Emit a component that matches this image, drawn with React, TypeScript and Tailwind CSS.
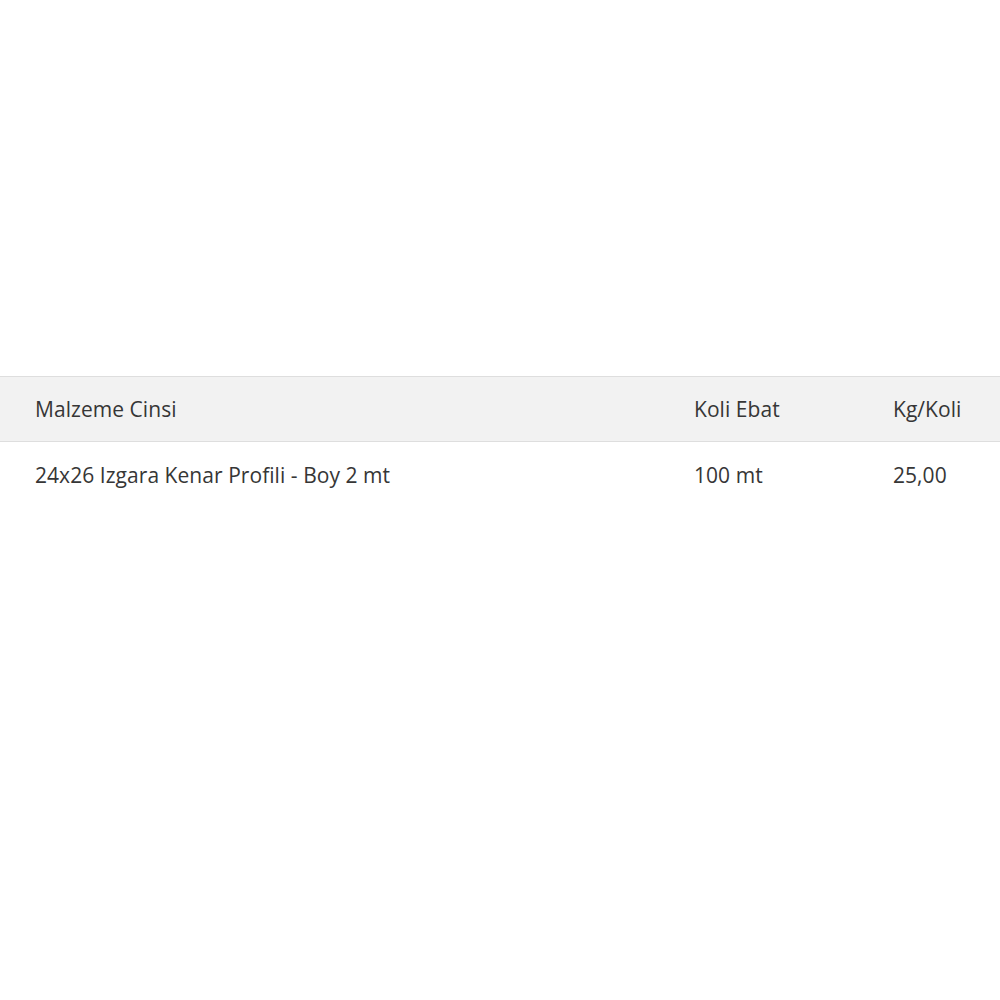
export default function App() {
  const rows = [{ name: "24x26 Izgara Kenar Profili - Boy 2 mt", ebat: "100 mt", kg: "25,00" }];

  return (
    <div className="min-h-[1000px] bg-white pt-[376px] font-['Open_Sans',sans-serif] text-[21px] tracking-[0.05px] text-[#363636]">
      <table className="w-full border-collapse">
        <thead>
          <tr className="border-y border-[#dedede] bg-[#f2f2f2]">
            <th className="h-[65px] w-[659px] pl-[35px] pt-[2px] text-left font-normal">Malzeme Cinsi</th>
            <th className="w-[199px] pl-[35px] pt-[2px] text-left font-normal">Koli Ebat</th>
            <th className="pl-[35px] pt-[2px] text-left font-normal">Kg/Koli</th>
          </tr>
        </thead>
        <tbody>
          {rows.map((r) => (
            <tr key={r.name}>
              <td className="h-[66px] pl-[35px] pt-[2px]">{r.name}</td>
              <td className="pl-[35px] pt-[2px]">{r.ebat}</td>
              <td className="pl-[35px] pt-[2px]">{r.kg}</td>
            </tr>
          ))}
        </tbody>
      </table>
    </div>
  );
}
